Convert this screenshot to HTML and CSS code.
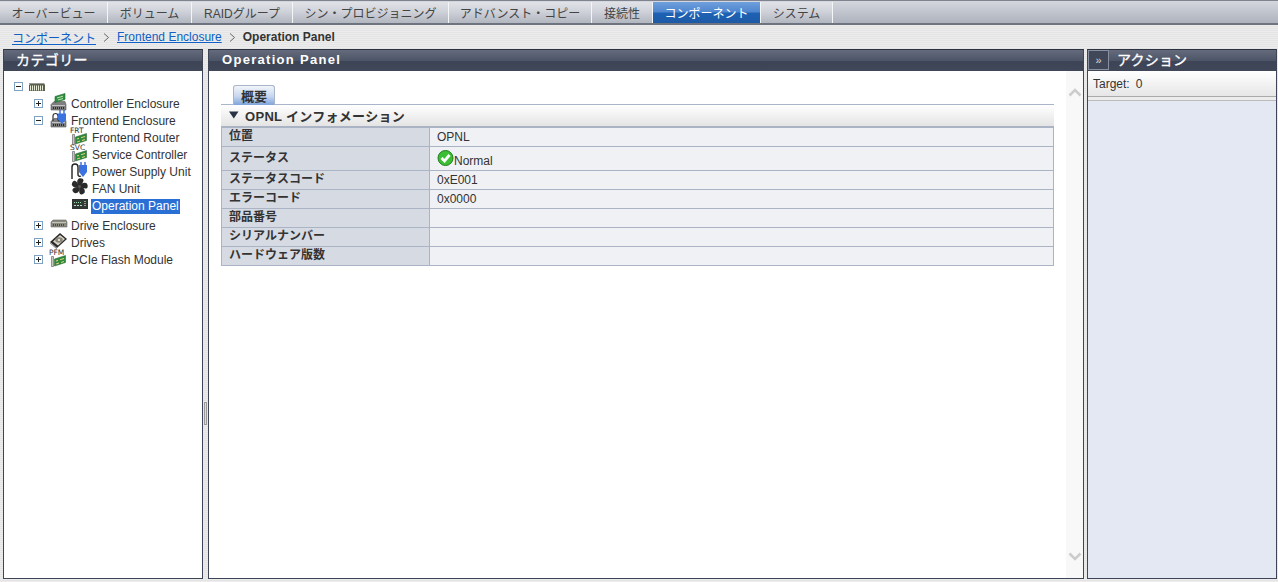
FILE: index.html
```html
<!DOCTYPE html>
<html lang="ja">
<head>
<meta charset="utf-8">
<title>Operation Panel</title>
<link rel="stylesheet" href="styles.css">
</head>
<body>
<svg class="defs" width="0" height="0" aria-hidden="true">
  <defs>
    <g id="board">
      <path d="M1.500 7.500h2v10h-2z" fill="#c4c8c0" stroke="#6f6f6f" stroke-width=".7"/>
      <path d="M4.500 10l11-3.500v7l-11 3.500z" fill="#2c8a3c" stroke="#1c5a28" stroke-width=".5"/>
      <path d="M6 12l2-.6M10 10.700l4-1.200M6 15l3-1M11 13.500l3-1" stroke="#d9cf77" stroke-width="1.200"/>
    </g>
    <g id="chassis">
      <path d="M1 11.500l3-3h11l1 3v5.500H1z" fill="#7f7f7f" stroke="#565656" stroke-width=".6"/>
      <path d="M2 12h13v1H2z" fill="#c4c4c4"/>
      <path d="M3 14.500h11M3 15.500h11" stroke="#2f2f2f" stroke-dasharray="1 1"/>
    </g>
    <g id="plug">
      <path d="M10 0v4M14 0v4" stroke="#2f5fd0" stroke-width="1.300"/>
      <path d="M8 3.500h8v6l-4 4.500-4-4.500z" fill="#3c72e0"/>
    </g>
    <path id="blade" d="M8.500 8.500C5.500 6.500 5.500 2 8 .5c2.500-.5 4.500.5 4.500 1.800 0 2.200-2 3.700-4 6.200z" fill="#2a2a2a"/>
  </defs>
</svg>
<nav class="tabs">
  <a class="tab t1">オーバービュー</a>
  <a class="tab t2">ボリューム</a>
  <a class="tab t3">RAIDグループ</a>
  <a class="tab t4">シン・プロビジョニング</a>
  <a class="tab t5">アドバンスト・コピー</a>
  <a class="tab t6">接続性</a>
  <a class="tab t7 active">コンポーネント</a>
  <a class="tab t8">システム</a>
</nav>
<div class="crumbs">
  <a href="#">コンポーネント</a><span class="sep"><svg width="7" height="9" viewBox="0 0 7 9"><path d="M1 .5l4.500 4-4.500 4" fill="none" stroke="#666"/></svg></span><a href="#">Frontend Enclosure</a><span class="sep"><svg width="7" height="9" viewBox="0 0 7 9"><path d="M1 .5l4.500 4-4.500 4" fill="none" stroke="#666"/></svg></span><b>Operation Panel</b>
</div>
<main class="panels">
  <section class="panel left">
    <h2 class="head cat">カテゴリー</h2>
    <ul class="tree">
      <li class="row root"><i class="tog minus"></i>
        <svg class="ic small" width="18" height="10" viewBox="0 0 18 10"><path d="M1 3l2-2h13l1 2v6H1z" fill="#58614c"/><path d="M1 1.500h15" stroke="#999"/><path d="M2.500 3.500v5M4.500 3.500v5M6.500 3.500v5M8.500 3.500v5M10.500 3.500v5M12.500 3.500v5M14.500 3.500v5" stroke="#e6ecd8"/></svg>
      </li>
      <li class="row l1"><i class="tog plus"></i>
        <svg class="ic" width="18" height="17" viewBox="0 0 18 17"><use href="#chassis"/><path d="M5 3.500l10-3v6l-10 3z" fill="#2f8f45" stroke="#1f6a30" stroke-width=".6"/><path d="M7 5l6-1.800M8 7l5-1.500" stroke="#bfe6a8"/></svg>
        <span>Controller Enclosure</span></li>
      <li class="row l1"><i class="tog minus"></i>
        <svg class="ic" width="18" height="17" viewBox="0 0 18 17"><use href="#chassis"/><path d="M3 11V6a2.500 2.500 0 015 0v3a2 2 0 002 2" fill="none" stroke="#333" stroke-width="1.200"/><use href="#plug"/></svg>
        <span>Frontend Enclosure</span></li>
      <li class="row l2"><svg class="ic" width="18" height="17" viewBox="0 0 18 17"><text x="-1" y="6" class="tiny">FRT</text><use href="#board"/></svg><span>Frontend Router</span></li>
      <li class="row l2"><svg class="ic" width="18" height="17" viewBox="0 0 18 17"><text x="-1" y="6" class="tiny">SVC</text><use href="#board"/></svg><span>Service Controller</span></li>
      <li class="row l2"><svg class="ic" width="18" height="17" viewBox="0 0 18 17"><path d="M1 18V6a3 3 0 016 0v8a2 2 0 003 1" fill="none" stroke="#222" stroke-width="1.400"/><path d="M10 1v3M14 1v3" stroke="#2f5fd0" stroke-width="1.300"/><path d="M8 4h8v7l-4 5-4-5z" fill="#3c72e0"/></svg><span>Power Supply Unit</span></li>
      <li class="row l2"><svg class="ic" width="18" height="17" viewBox="0 0 18 17"><use href="#blade"/><use href="#blade" transform="rotate(72 8.500 8.500)"/><use href="#blade" transform="rotate(144 8.500 8.500)"/><use href="#blade" transform="rotate(216 8.500 8.500)"/><use href="#blade" transform="rotate(288 8.500 8.500)"/><circle cx="8.500" cy="8.500" r="1.500" fill="#555"/></svg><span>FAN Unit</span></li>
      <li class="row l2 last"><svg class="ic" width="18" height="17" viewBox="0 0 18 17"><rect x="1.500" y="4.500" width="15" height="9" fill="#2f3a34" stroke="#333"/><path d="M3 7.500h8" stroke="#9fdcae" stroke-dasharray="1 1"/><path d="M3 10.500h8" stroke="#c6d8ca" stroke-dasharray="2 1"/><path d="M13 6.500h2M13 8.500h2M13 10.500h2" stroke="#999"/></svg><span class="sel">Operation Panel</span></li>
      <li class="row l1"><i class="tog plus"></i>
        <svg class="ic" width="18" height="17" viewBox="0 0 18 17"><path d="M1 7l2-2h13l1 2v5H1z" fill="#8b8b7f" stroke="#6a6a6a" stroke-width=".6"/><path d="M2 7.500h14" stroke="#c4c4b8"/><path d="M3 9.500h12M3 10.500h12" stroke="#4c4c4c" stroke-dasharray="1 1"/></svg>
        <span>Drive Enclosure</span></li>
      <li class="row l1"><i class="tog plus"></i>
        <svg class="ic" width="18" height="17" viewBox="0 0 18 17"><path d="M0 10l10-9 7 6-10 9z" fill="#2a2a2a"/><path d="M0 10l7 6v1.500L0 11.500z" fill="#8f8f8f"/><path d="M3 9.500l7-6.500 5 4-7 6.500z" fill="#d8d4c6"/><ellipse cx="9" cy="8" rx="3.800" ry="2.800" fill="#8b8678"/><circle cx="9" cy="8" r="1.100" fill="#efefe8"/></svg>
        <span>Drives</span></li>
      <li class="row l1"><i class="tog plus"></i>
        <svg class="ic" width="18" height="17" viewBox="0 0 18 17"><text x="-1" y="6" class="tiny">PFM</text><use href="#board"/></svg>
        <span>PCIe Flash Module</span></li>
    </ul>
  </section>
  <div class="splitter"><i class="grip"></i></div>
  <section class="panel center">
    <h2 class="head title">Operation Panel</h2>
    <div class="body">
      <div class="content">
        <div class="subtabs"><span class="subtab">概要</span></div>
        <h3 class="sect"><svg width="10" height="8" viewBox="0 0 10 8"><path d="M0 .5h9.500L4.800 7.500z" fill="#2a3344"/></svg>OPNL インフォメーション</h3>
        <table class="info">
          <tr><th>位置</th><td>OPNL</td></tr>
          <tr class="tall"><th>ステータス</th><td><svg class="ok" width="17" height="16" viewBox="0 0 17 16"><circle cx="8.500" cy="8" r="7.500" fill="#3cbf34" stroke="#1c7d1c"/><path d="M4.500 8l3 3 5-6" fill="none" stroke="#fff" stroke-width="2.800"/></svg><span class="norm">Normal</span></td></tr>
          <tr><th>ステータスコード</th><td>0xE001</td></tr>
          <tr><th>エラーコード</th><td>0x0000</td></tr>
          <tr><th>部品番号</th><td></td></tr>
          <tr><th>シリアルナンバー</th><td></td></tr>
          <tr><th>ハードウェア版数</th><td></td></tr>
        </table>
      </div>
      <div class="scroll">
        <svg width="14" height="9" viewBox="0 0 14 9"><path d="M1.500 7.500L7 2l5.500 5.500" fill="none" stroke="#ccc" stroke-width="2.500"/></svg>
        <svg width="14" height="9" viewBox="0 0 14 9"><path d="M1.500 1.500L7 7l5.500-5.500" fill="none" stroke="#ccc" stroke-width="2.500"/></svg>
      </div>
    </div>
  </section>
  <section class="panel right">
    <h2 class="head act"><span class="collapse">»</span>アクション</h2>
    <div class="target"><span>Target:</span><span>0</span></div>
    <div class="act-body"></div>
  </section>
</main>
</body>
</html>
```
FILE: styles.css
```css
* { box-sizing: border-box; }
html, body { margin: 0; height: 100%; overflow: hidden; }
body {
  width: 1278px; height: 582px; display: flex; flex-direction: column;
  font: 12px "Liberation Sans", "Noto Sans CJK JP", sans-serif;
  color: #333;
  background: repeating-linear-gradient(#e4e4e4 0 1px, #ececec 1px 2px);
}
.defs { position: absolute; }
.tiny { font: 7.500px "DejaVu Sans", sans-serif; fill: #333; }

.tabs {
  height: 25px; flex: none; display: flex; padding-top: 1px;
  background: linear-gradient(#d4d7de, #adb2bd);
  border-top: 1px solid #7e838e;
  border-bottom: 2px solid #6e7380;
}
.tab {
  display: flex; align-items: center; justify-content: center;
  height: 21px; font-size: 12px; color: #444;
  border-right: 1px solid #f4f5f7;
  background: linear-gradient(#e0e2e7, #cfd2d9 45%, #b2b6c0);
}
.t1 { width: 108px; } .t2 { width: 84px; } .t3 { width: 101px; } .t4 { width: 156px; }
.t5 { width: 143px; } .t6 { width: 61px; } .t7 { width: 108px; } .t8 { width: 72px; }
.tab.active {
  color: #fff;
  background: linear-gradient(#6f9fdc, #4f86cf 48%, #1e62b4 52%, #1d5aa6);
}

.crumbs { height: 24px; flex: none; display: flex; align-items: center; padding-left: 12px; }
.crumbs a { color: #0f5fc4; text-decoration: underline; }
.crumbs b { color: #333; }
.sep { width: 21px; display: flex; justify-content: center; }

.panels { flex: none; height: 530px; display: flex; padding-left: 3px; }
.panel { border: 1px solid #3d4557; border-top: 1px solid #2b3242; background: #fff; display: flex; flex-direction: column; }
.left { width: 200px; }
.center { width: 876px; }
.right { width: 190px; margin-left: 3px; }
.splitter { width: 5px; display: flex; align-items: center; }
.grip { display: block; width: 3px; height: 23px; margin: 198px 0 0 1px; border: 1px solid #999; background: #ddd; }

.head {
  height: 21px; flex: none; margin: 0; color: #fff; font-size: 14px; font-weight: 700; line-height: 16px; padding-bottom: 1px;
  background: linear-gradient(#656b7c, #4d5568 50%, #3c4456 55%, #3f4759);
  display: flex; align-items: center;
}
.cat { padding-left: 12px; letter-spacing: .4px; font-weight: 400; -webkit-text-stroke: .3px #fff; }
.title { padding-left: 13px; font-size: 13px; letter-spacing: 1.300px; }
.act { letter-spacing: .2px; font-weight: 400; -webkit-text-stroke: .3px #fff; }
.collapse {
  width: 21px; height: 20px; margin: 0 8px 0 0; border: 1px solid #8990a0; color: #ddd;
  display: flex; align-items: center; justify-content: center; font-size: 11px; font-weight: 400; letter-spacing: 0;
  -webkit-text-stroke: 0; background: #3f4759;
}

.tree { list-style: none; margin: 7px 0 0; padding: 0; flex: 1; }
.row { height: 17px; display: flex; align-items: center; position: relative; color: #333; white-space: nowrap; }
.root { padding-left: 10px; }
.l1 { padding-left: 30px; }
.l2 { padding-left: 67px; }
.last { margin-bottom: 3px; }
.ic { flex: none; width: 18px; margin-right: 3px; overflow: visible; }
.small { margin-left: 5px; }
.l1 .ic { margin-left: 7px; }
.l1 .ic, .l2 .ic { transform: translateY(-2px); }
.tog {
  display: block; width: 9px; height: 9px; flex: none; border: 1px solid #7fa2c4; background: #fff; position: relative;
}
.tog::before { content: ""; position: absolute; left: 1px; top: 3px; width: 5px; height: 1px; background: #222; }
.plus::after { content: ""; position: absolute; left: 3px; top: 1px; width: 1px; height: 5px; background: #222; }
.sel { background: #2a6fd4; color: #fff; padding: 0 1px; line-height: 15px; margin: 1px 0 0 -1px; }

.body { flex: 1; display: flex; min-height: 0; }
.content { width: 857px; padding: 13px 12px 0; flex: none; }
.subtabs { height: 21px; border-bottom: 1px solid #a9b5c8; padding-left: 12px; display: flex; align-items: flex-end; }
.subtab {
  width: 42px; height: 20px; margin-bottom: -1px; display: flex; align-items: center; justify-content: center;
  font-size: 13px; font-weight: 700; color: #333; border: 1px solid #a9b5c8; border-bottom: 0; border-radius: 3px 3px 0 0;
  background: linear-gradient(#f2f5fb, #c6d6ee 55%, #7ea3dc);
}
.sect {
  margin: 0; height: 22px; display: flex; align-items: center; gap: 6px; padding: 0 0 1px 8px; font-size: 13px; font-weight: 700;
  background: linear-gradient(#fff, #e4e4e4); color: #333; letter-spacing: .3px; border-bottom: 1px solid #aab4c4;
}
.info { width: 833px; border-collapse: collapse; table-layout: fixed; border: 1px solid #aab4c4; line-height: 16px; }
.info tr { height: 19px; }
.info tr.tall { height: 24px; }
.info th, .info td { border: 1px solid #aab4c4; padding: 0 0 1px 7px; text-align: left; color: #333; line-height: 16px; }
.info th { width: 208px; background: #d5dae3; font-weight: 700; padding-bottom: 2px; }
.info td { background: #f0f1f4; }
.ok { vertical-align: top; }
.norm { position: relative; top: 3px; }
.scroll { flex: 1; background: #f8f8f8; display: flex; flex-direction: column; justify-content: space-between; align-items: center; padding: 17px 0 17px; }

.target {
  height: 26px; flex: none; display: flex; align-items: center; gap: 6px; padding-left: 5px; color: #333;
  background: linear-gradient(#fff, #e6e6e6); border-bottom: 1px solid #aaa;
}
.act-body { flex: 1; background: #e3e8f2; border-top: 3px solid #ececec; box-shadow: inset 0 1px 0 #bbb; }
```
